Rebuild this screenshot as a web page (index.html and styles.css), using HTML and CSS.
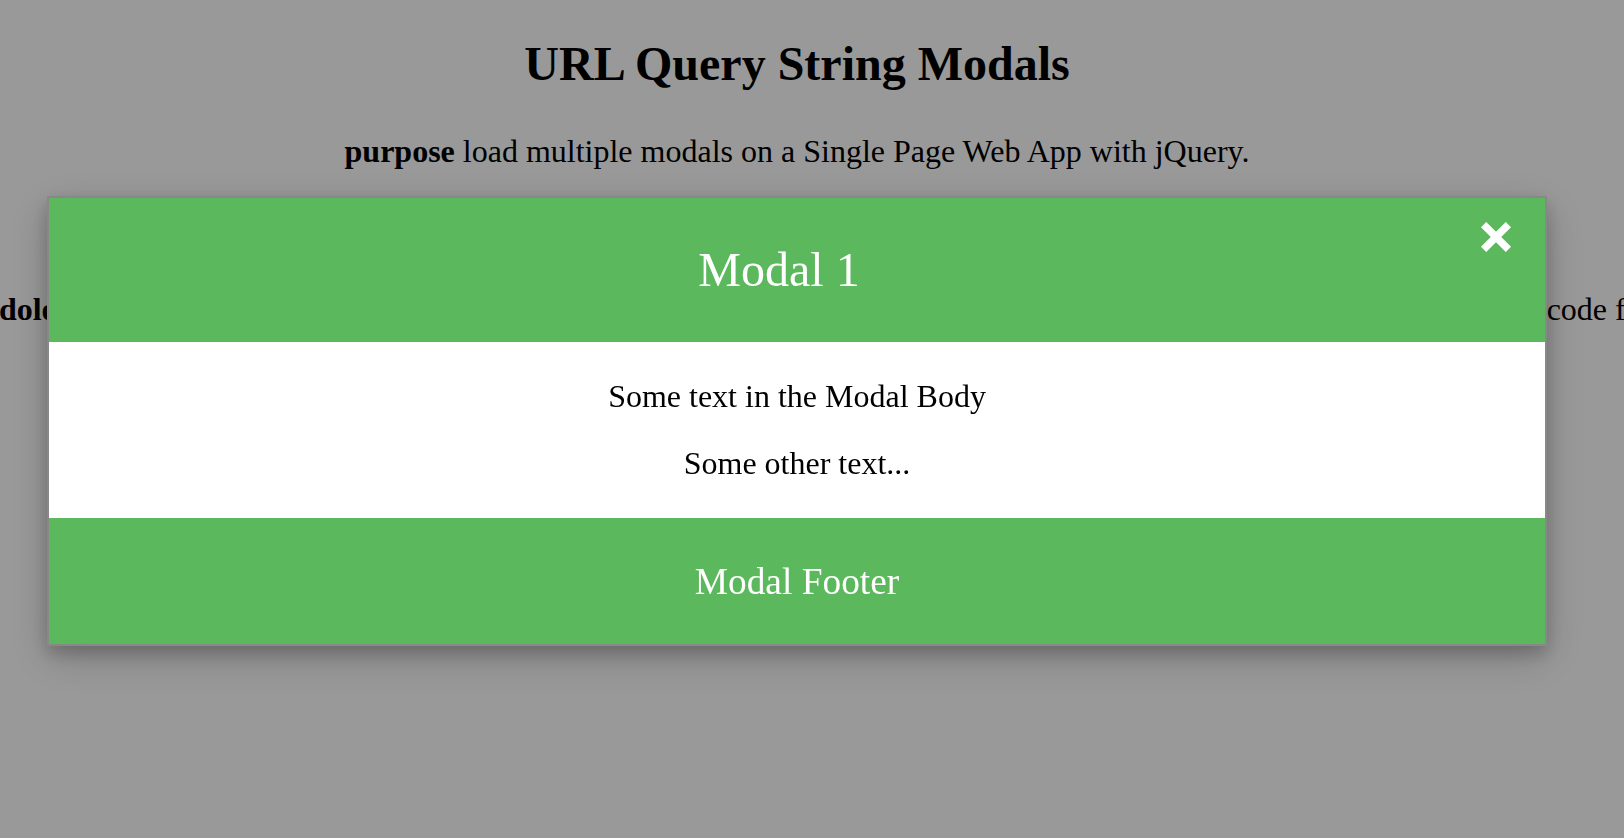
FILE: index.html
```html
<!DOCTYPE html>
<html lang="en">
<head>
<meta charset="utf-8">
<title>URL Query String Modals</title>
<link rel="stylesheet" href="styles.css">
</head>
<body>
<div class="page">
  <h1 class="title">URL Query String Modals</h1>
  <p class="purpose"><b>purpose</b> load multiple modals on a Single Page Web App with jQuery.</p>
  <div class="wide">
    <p class="wide-text"><b>Lorem ipsum dolor</b> sit amet, consectetur adipiscing elit. Every modal opens from its own URL query string. Read the full page source code for the demo.</p>
  </div>
</div>

<div class="overlay">
  <div class="modal">
    <div class="modal-header">
      <span class="close" aria-label="Close">
        <svg width="30" height="30" viewBox="0 0 30 30" aria-hidden="true">
          <line x1="2.6" y1="2.6" x2="27.4" y2="27.4" stroke="#fff" stroke-width="7.4"/>
          <line x1="27.4" y1="2.6" x2="2.6" y2="27.4" stroke="#fff" stroke-width="7.4"/>
        </svg>
      </span>
      <h2 class="modal-title">Modal 1</h2>
    </div>
    <div class="modal-body">
      <p>Some text in the Modal Body</p>
      <p>Some other text...</p>
    </div>
    <div class="modal-footer">
      <h3 class="footer-title">Modal Footer</h3>
    </div>
  </div>
</div>
</body>
</html>
```
FILE: styles.css
```css
html, body {
  margin: 0;
  padding: 0;
  overflow: hidden;
}

body {
  font-family: "Liberation Serif", "Times New Roman", serif;
  color: #000;
  background: #fff;
  width: 1624px;
  height: 838px;
}

.page {
  width: 1594px;
  text-align: center;
}

.title {
  font-size: 48px;
  font-weight: bold;
  line-height: 54px;
  margin: 37px 0 0;
}

.purpose {
  font-size: 32px;
  line-height: 36px;
  margin: 42px 0 0;
}

.wide {
  display: flex;
  justify-content: center;
  margin-top: 122px;
}

.wide-text {
  margin: 0;
  flex: none;
  white-space: nowrap;
  font-size: 32px;
  line-height: 36px;
}

.overlay {
  position: fixed;
  top: 0;
  left: 0;
  right: 0;
  bottom: 0;
  box-sizing: border-box;
  padding: 196px 30px 0 0;
  background: rgba(0, 0, 0, 0.4);
}

.modal {
  width: 93.85%;
  margin: 0 auto;
  background: #fff;
  border: 2px solid #888;
  box-shadow: 0 8px 16px 0 rgba(0, 0, 0, 0.2), 0 12px 40px 0 rgba(0, 0, 0, 0.19);
  text-align: center;
}

.modal-header {
  background: #5cb85c;
  color: #fff;
  padding: 4px 32px;
}

.close {
  float: right;
  margin-top: 20px;
}

.close svg {
  display: block;
  margin: 0 2px 0 4px;
}

.modal-title {
  font-size: 48px;
  font-weight: normal;
  line-height: 56px;
  margin: 40px 0;
}

.modal-body {
  padding: 5px 32px 6px;
}

.modal-body p {
  font-size: 32px;
  line-height: 36px;
  margin: 31px 0;
}

.modal-footer {
  background: #5cb85c;
  color: #fff;
  padding: 4px 32px;
}

.footer-title {
  font-size: 37.4px;
  font-weight: normal;
  line-height: 43px;
  margin: 38px 0 37px;
}
```
